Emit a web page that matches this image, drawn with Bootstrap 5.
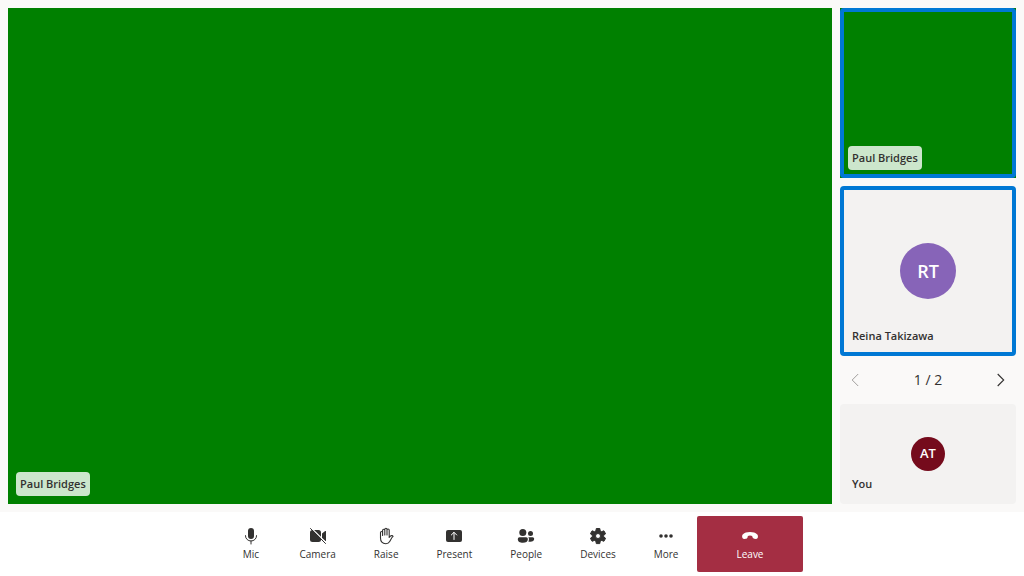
<!DOCTYPE html>
<html lang="en">
<head>
<meta charset="utf-8">
<meta name="viewport" content="width=device-width, initial-scale=1">
<title>Call</title>
<link href="https://cdn.jsdelivr.net/npm/bootstrap@5.3.0/dist/css/bootstrap.min.css" rel="stylesheet">
<style>
body { font-family: "Segoe UI", "Open Sans", "Noto Sans", sans-serif; color: #323130; background: #faf9f8; }
.sidebar { width: 176px; }
.tile { background: #f3f2f1; border-radius: 4px; }
.tile-video { background: #008000; border-radius: 0; }
.tile-remote { flex: 1 1 0; }
.tile-local { height: 100px; }
.speaking::after { content: ""; position: absolute; inset: 0; border: 4px solid #0078d4; border-radius: 4px; pointer-events: none; }
.name-tag { left: 8px; bottom: 8px; padding: 0 4px; font-size: 11px; line-height: 24px; font-weight: 600; border-radius: 4px; }
.tile-video .name-tag { background: rgba(255, 255, 255, .8); }
.avatar { width: 56px; height: 56px; font-size: 18px; font-weight: 600; background: #8764b8; }
.avatar-sm { width: 34px; height: 34px; font-size: 13px; background: #750b1c; }
.pager { height: 32px; font-size: 14px; line-height: 20px; }
.pager-btn { width: 32px; height: 32px; color: #323130; }
.pager-btn:disabled { color: #a19f9d; opacity: 1; }
.call-btn { min-width: 59px; height: 56px; padding: 0 19px; font-size: 10px; line-height: 16px; border-radius: 2px; color: #323130; background: transparent; }
.call-btn svg { width: 20px; height: 20px; }
.leave-btn { padding: 0 39px; color: #fff; background: #a42e43; }
</style>
</head>
<body>
<div class="d-flex flex-column vh-100">
  <main class="d-flex flex-grow-1 gap-2 p-2">
    <section class="tile tile-video position-relative flex-grow-1">
      <span class="name-tag position-absolute">Paul Bridges</span>
    </section>
    <aside class="sidebar d-flex flex-column flex-shrink-0 gap-2">
      <div class="tile tile-video tile-remote speaking position-relative">
        <span class="name-tag position-absolute">Paul Bridges</span>
      </div>
      <div class="tile tile-remote speaking position-relative d-flex align-items-center justify-content-center">
        <div class="avatar rounded-circle text-white d-flex align-items-center justify-content-center">RT</div>
        <span class="name-tag position-absolute">Reina Takizawa</span>
      </div>
      <nav class="pager d-flex align-items-center justify-content-between" aria-label="Participants">
        <button type="button" class="pager-btn btn border-0 p-0 d-flex align-items-center justify-content-center" disabled aria-label="Previous">
          <svg width="14" height="14" viewBox="0 0 14 14" fill="none" stroke="currentColor" stroke-width="1"><path d="M9.200 1 3.200 7l6 6"/></svg>
        </button>
        <span>1 / 2</span>
        <button type="button" class="pager-btn btn border-0 p-0 d-flex align-items-center justify-content-center" aria-label="Next">
          <svg width="14" height="14" viewBox="0 0 14 14" fill="none" stroke="currentColor" stroke-width="1.100"><path d="M4.700 1l6 6-6 6"/></svg>
        </button>
      </nav>
      <div class="tile tile-local position-relative d-flex align-items-center justify-content-center">
        <div class="avatar avatar-sm rounded-circle text-white d-flex align-items-center justify-content-center">AT</div>
        <span class="name-tag position-absolute">You</span>
      </div>
    </aside>
  </main>
  <footer class="d-flex justify-content-center py-1 bg-white">
    <button type="button" class="call-btn btn border-0 d-flex flex-column align-items-center justify-content-center">
      <svg viewBox="0 0 20 20" fill="currentColor"><rect x="7" y="2" width="6" height="11" rx="3"/><path d="M4.500 9.500v.3a5.500 5.200 0 0 0 11 0v-.3M10 15v3" fill="none" stroke="currentColor" stroke-linecap="round"/></svg>
      <span>Mic</span>
    </button>
    <button type="button" class="call-btn btn border-0 d-flex flex-column align-items-center justify-content-center">
      <svg viewBox="0 0 20 20" fill="currentColor"><rect x="2" y="4" width="11" height="12" rx="2.500"/><path d="M14 7.400 17.200 5.100a.5.500 0 0 1 .8.400v9a.5.500 0 0 1-.8.400L14 12.600z"/><path d="M3.200 1.800 18.600 17.200" stroke="#fff" stroke-width="1.200"/><path d="M2.500 2.500 17.500 17.500" stroke="currentColor" stroke-linecap="round"/></svg>
      <span>Camera</span>
    </button>
    <button type="button" class="call-btn btn border-0 d-flex flex-column align-items-center justify-content-center">
      <svg viewBox="0 0 20 20" fill="none" stroke="currentColor" stroke-width="1.100" stroke-linecap="round" stroke-linejoin="round"><path d="M6.600 9.500V4.300a1.100 1.100 0 0 1 2.200 0V9V3.400a1.100 1.100 0 0 1 2.200 0V9V4.100a1.100 1.100 0 0 1 2.200 0v7.300l1.200-1.300c.8-.8 2.200-.6 2.700.3-1.700 1.400-2.400 3.400-3.400 5.100-.8 1.500-2 2.200-3.800 2.200-3.300 0-5.400-1.800-5.400-5.600V6.600a1.050 1.050 0 0 1 2.100 0z"/></svg>
      <span>Raise</span>
    </button>
    <button type="button" class="call-btn btn border-0 d-flex flex-column align-items-center justify-content-center">
      <svg viewBox="0 0 20 20" fill="currentColor"><rect x="2" y="4" width="16" height="12" rx="2"/><path d="M10 13.500v-7M7.300 9 10 6.300 12.700 9" fill="none" stroke="#fff" stroke-linecap="round" stroke-linejoin="round"/></svg>
      <span>Present</span>
    </button>
    <button type="button" class="call-btn btn border-0 d-flex flex-column align-items-center justify-content-center">
      <svg viewBox="0 0 20 20" fill="currentColor"><circle cx="6.800" cy="6.500" r="3.500"/><circle cx="14.500" cy="7.500" r="2.500"/><path d="M3.500 11.200h6.700a1.700 1.700 0 0 1 1.700 1.700c0 2.700-2.100 3.800-5 3.800s-5.100-1.100-5.100-3.800a1.700 1.700 0 0 1 1.700-1.700zM12.300 11.200h4.400a1.500 1.500 0 0 1 1.500 1.500c0 2-1.500 3-3.900 3-.8 0-1.400-.1-2-.3.800-1.300 1-2.800 0-4.200z"/></svg>
      <span>People</span>
    </button>
    <button type="button" class="call-btn btn border-0 d-flex flex-column align-items-center justify-content-center">
      <svg viewBox="0 0 20 20" fill="currentColor"><path fill-rule="evenodd" stroke="currentColor" stroke-linejoin="round" d="m8.300 2.500-.4 2.300-1.500.9-2.300-.9-1.700 3 1.900 1.500v1.500l-1.900 1.500 1.700 3 2.300-.9 1.500.9.400 2.300h3.500l.4-2.300 1.500-.9 2.200.9 1.700-3-1.900-1.500V9.300l1.900-1.500-1.700-3-2.200.9-1.500-.9-.4-2.300zM10 7.500a2.500 2.500 0 1 1 0 5 2.500 2.500 0 0 1 0-5z"/></svg>
      <span>Devices</span>
    </button>
    <button type="button" class="call-btn btn border-0 d-flex flex-column align-items-center justify-content-center">
      <svg viewBox="0 0 20 20" fill="currentColor"><circle cx="5" cy="10" r="1.800"/><circle cx="10" cy="10" r="1.800"/><circle cx="15" cy="10" r="1.800"/></svg>
      <span>More</span>
    </button>
    <button type="button" class="call-btn leave-btn btn border-0 d-flex flex-column align-items-center justify-content-center">
      <svg viewBox="0 0 20 20" fill="currentColor"><path d="M17.900 10.900l-.1.700c-.2.900-1 1.500-1.900 1.400l-1.600-.2c-.8-.1-1.400-.6-1.700-1.300l-.5-1.600C11.500 9.600 10.800 9.400 10 9.400s-1.500.2-2.100.5l-.4 1.600c-.2.700-.8 1.200-1.600 1.300l-1.700.2c-.9.100-1.700-.5-1.900-1.400l-.1-.7c-.2-1 0-2 .8-2.700C4.500 6.800 6.900 6 10 6s5.500.8 7 2.200c.8.700 1.100 1.700.9 2.700z"/></svg>
      <span>Leave</span>
    </button>
  </footer>
</div>
<script src="https://cdn.jsdelivr.net/npm/bootstrap@5.3.0/dist/js/bootstrap.bundle.min.js"></script>
</body>
</html>
